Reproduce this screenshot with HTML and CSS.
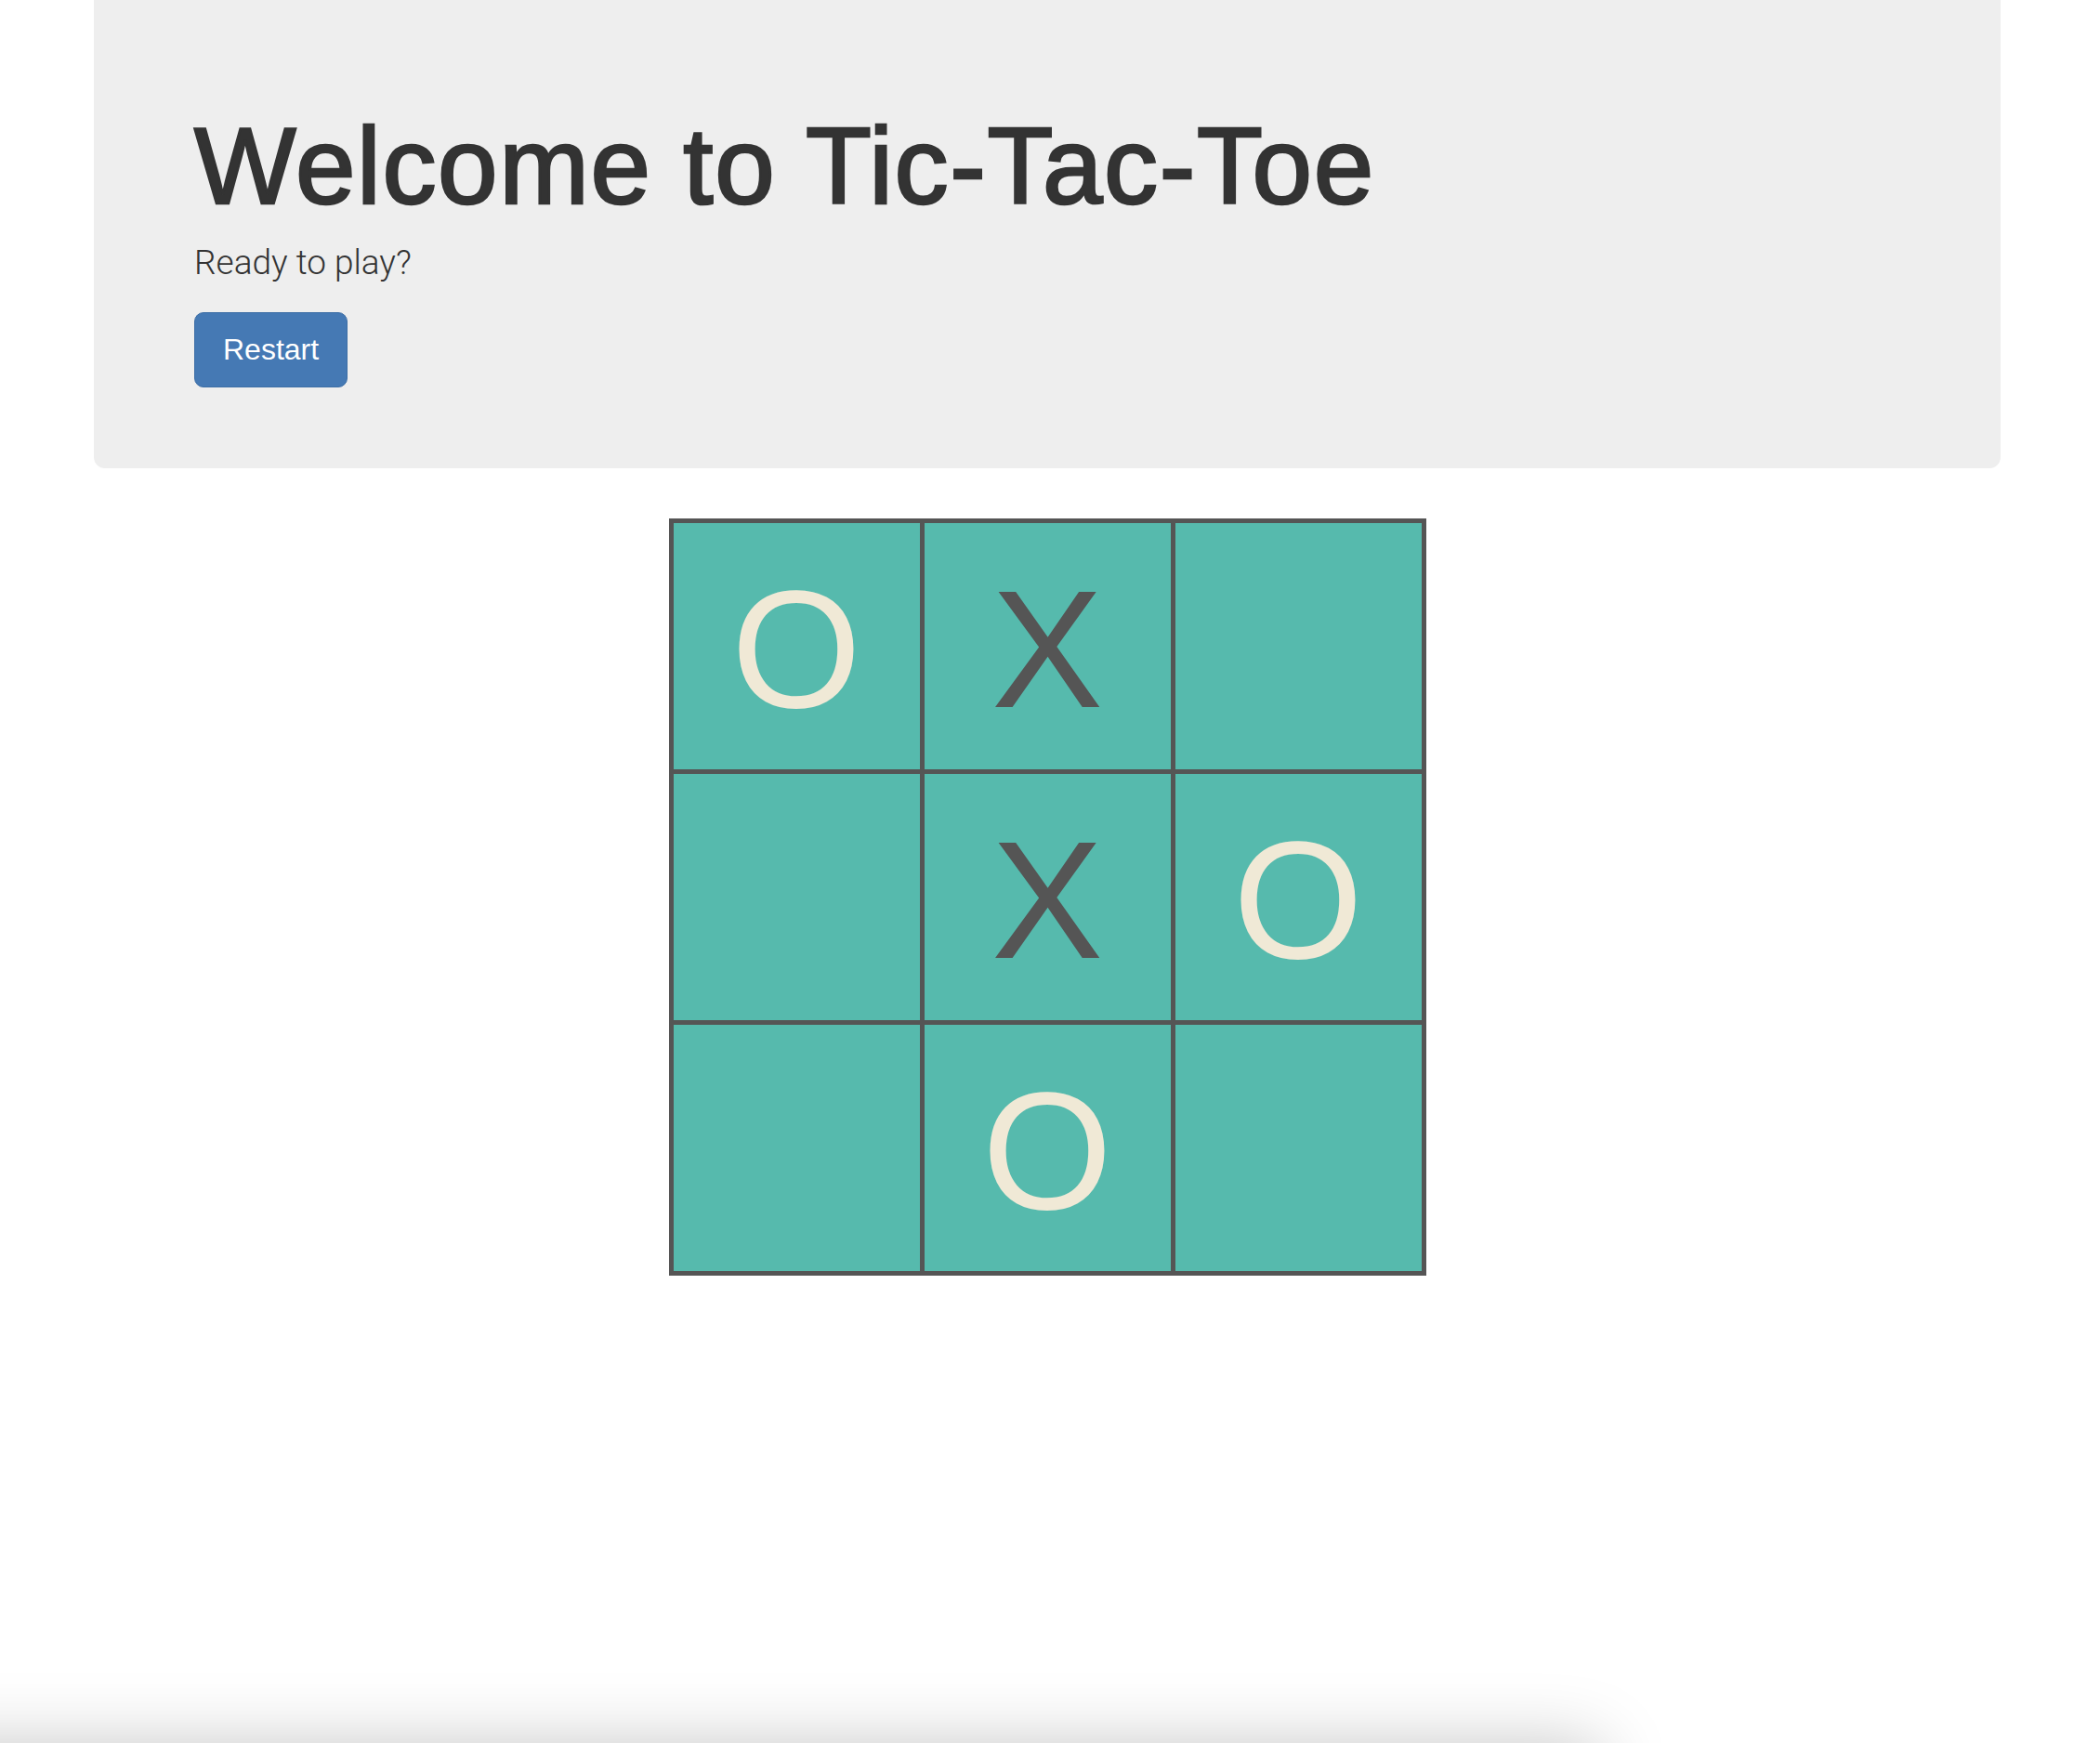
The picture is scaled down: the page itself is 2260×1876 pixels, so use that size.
FILE: index.html
```html
<!DOCTYPE html>
<html lang="en">
<head>
<meta charset="utf-8">
<title>Tic-Tac-Toe</title>
<link rel="stylesheet" href="styles.css">
</head>
<body>
  <div class="page">
    <header class="jumbotron">
      <h1 class="title">Welcome to Tic-Tac-Toe</h1>
      <p class="lead">Ready to play?</p>
      <button class="btn-restart" type="button">Restart</button>
    </header>
    <main class="board">
      <div class="cell"><span class="mark mark-o">O</span></div>
      <div class="cell"><span class="mark mark-x">X</span></div>
      <div class="cell"></div>
      <div class="cell"></div>
      <div class="cell"><span class="mark mark-x">X</span></div>
      <div class="cell"><span class="mark mark-o">O</span></div>
      <div class="cell"></div>
      <div class="cell"><span class="mark mark-o">O</span></div>
      <div class="cell"></div>
    </main>
  </div>
  <div class="dock-shadow"></div>
</body>
</html>
```
FILE: styles.css
```css
html, body {
  margin: 0;
  padding: 0;
  background: #ffffff;
}

body {
  font-family: "Liberation Sans", Arial, sans-serif;
  color: #333333;
  overflow: hidden;
}

.page {
  padding: 0 107px 0 101px;
  display: flex;
  flex-direction: column;
  align-items: center;
}

.jumbotron {
  align-self: stretch;
  background: #eeeeee;
  border-radius: 0 0 12px 12px;
  padding: 116px 108px 87px;
  display: flex;
  flex-direction: column;
  align-items: flex-start;
}

.title {
  margin: 0 0 17px;
  font-size: 116px;
  line-height: 1.1;
  font-weight: 400;
  color: #333333;
  -webkit-text-stroke: 2.6px #333333;
  letter-spacing: 1.6px;
}

.lead {
  margin: 0 0 31px;
  font-family: Roboto, "Liberation Sans", sans-serif;
  font-weight: 300;
  font-size: 37px;
  line-height: 1.2;
  color: #333333;
}

.btn-restart {
  font-family: "Liberation Sans", Arial, sans-serif;
  font-size: 32px;
  line-height: 1.4;
  padding: 17px 30px;
  color: #ffffff;
  background: #4579b4;
  border: 1px solid #3d6ea6;
  border-radius: 10px;
  cursor: pointer;
}

.board {
  margin-top: 54px;
  display: grid;
  grid-template-columns: repeat(3, 265px);
  grid-template-rows: repeat(3, 265px);
  gap: 5px;
  padding: 5px;
  background: #555555;
}

.cell {
  background: #56baad;
  display: flex;
  align-items: center;
  justify-content: center;
}

.mark {
  font-family: "Liberation Sans", Arial, sans-serif;
  font-size: 180px;
  line-height: 1;
  padding-top: 8px;
}

.mark-o {
  color: #f0e9d6;
}

.mark-x {
  color: #555555;
}

.dock-shadow {
  position: fixed;
  left: -200px;
  bottom: -100px;
  width: 1922px;
  height: 100px;
  box-shadow: 0 0 75px rgba(0, 0, 0, 0.22);
}
```
